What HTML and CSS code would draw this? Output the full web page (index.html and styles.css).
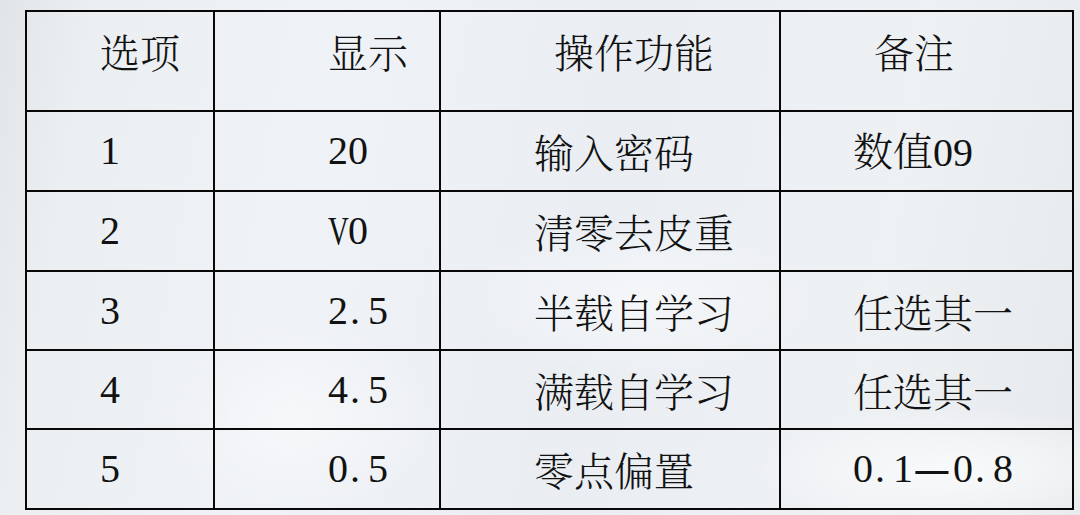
FILE: index.html
```html
<!DOCTYPE html>
<html lang="zh-CN">
<head>
<meta charset="utf-8">
<title>操作功能表</title>
<link rel="stylesheet" href="styles.css">
</head>
<body>
<div class="page">
  <table class="grid">
    <colgroup>
      <col class="c1"><col class="c2"><col class="c3"><col class="c4">
    </colgroup>
    <thead>
      <tr class="head">
        <th class="p1">选项</th>
        <th class="p2">显示</th>
        <th class="p3h">操作功能</th>
        <th class="p4h">备注</th>
      </tr>
    </thead>
    <tbody>
      <tr class="r80">
        <td class="p1 num">1</td>
        <td class="p2 num">20</td>
        <td class="p3">输入密码</td>
        <td class="p4">数值<span class="num">09</span></td>
      </tr>
      <tr class="r80">
        <td class="p1 num">2</td>
        <td class="p2 num"><span class="nv">V</span>0</td>
        <td class="p3">清零去皮重</td>
        <td class="p4"></td>
      </tr>
      <tr class="r79">
        <td class="p1 num">3</td>
        <td class="p2 num">2<span class="pt">.</span>5</td>
        <td class="p3">半载自学习</td>
        <td class="p4">任选其一</td>
      </tr>
      <tr class="r79">
        <td class="p1 num">4</td>
        <td class="p2 num">4<span class="pt">.</span>5</td>
        <td class="p3">满载自学习</td>
        <td class="p4">任选其一</td>
      </tr>
      <tr class="r80">
        <td class="p1 num">5</td>
        <td class="p2 num">0<span class="pt">.</span>5</td>
        <td class="p3">零点偏置</td>
        <td class="p4 num">0<span class="pt">.</span>1<span class="dash">--</span>0<span class="pt">.</span>8</td>
      </tr>
    </tbody>
  </table>
</div>
</body>
</html>
```
FILE: styles.css
```css
html, body {
  margin: 0;
  padding: 0;
  width: 1080px;
  height: 515px;
  overflow: hidden;
}

body {
  background:
    radial-gradient(ellipse 260px 120px at 640px 300px, rgba(255,255,255,0.5), rgba(255,255,255,0) 70%),
    radial-gradient(ellipse 300px 90px at 960px 470px, rgba(255,255,255,0.7), rgba(255,255,255,0) 70%),
    radial-gradient(ellipse 200px 140px at 300px 420px, rgba(255,255,255,0.45), rgba(255,255,255,0) 70%),
    linear-gradient(100deg, #e2e5e8 0%, #eceff2 8%, #eff2f6 30%, #eaeef3 55%, #eef1f4 80%, #e7eaed 100%);
  font-family: "Noto Serif CJK SC", "Noto Serif SC", "Source Han Serif SC", "AR PL UMing CN", "Noto Sans CJK SC", serif;
  color: #121212;
}

.num {
  font-family: "Liberation Serif", "Times New Roman", "Tinos", "DejaVu Serif", serif;
}

.page {
  padding: 10px 0 0 25px;
}

.grid {
  border-collapse: collapse;
  table-layout: fixed;
  width: 1047px;
}

.c1 { width: 188px; }
.c2 { width: 226px; }
.c3 { width: 340px; }
.c4 { width: 293px; }

.grid th,
.grid td {
  border: 2px solid #080808;
  font-size: 40px;
  font-weight: 300;
  line-height: 44px;
  text-align: left;
  vertical-align: middle;
  padding: 0;
  white-space: nowrap;
}

.head th {
  height: 100px;
  box-sizing: border-box;
  padding-bottom: 20px;
}

.r80 td { height: 80px; box-sizing: border-box; }
.r79 td { height: 79px; box-sizing: border-box; }

.p1 { padding-left: 73px !important; }
.p2 { padding-left: 113px !important; }
.p3 { padding-left: 93px !important; }
.p3h { padding-left: 113px !important; }
.p4 { padding-left: 72px !important; }
.p4h { padding-left: 93px !important; }

.pt {
  display: inline-block;
  width: 0.5em;
  text-align: left;
  text-indent: 2px;
}

.nv {
  display: inline-block;
  width: 0.5em;
  transform: scaleX(0.72);
  transform-origin: left center;
}

.dash {
  display: inline-block;
  width: 1em;
  transform: scaleX(1.6);
  transform-origin: left center;
  letter-spacing: -3px;
}
```
